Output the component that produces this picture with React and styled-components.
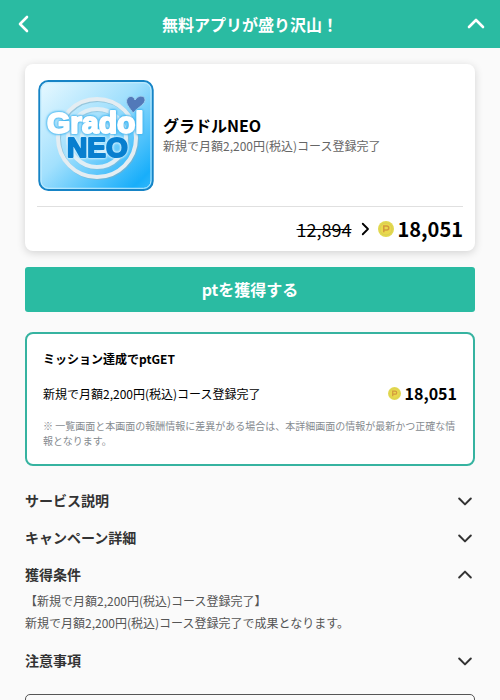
import { useState } from "react";
import styled, { createGlobalStyle } from "styled-components";

const GlobalStyle = createGlobalStyle`
  * {
    box-sizing: border-box;
  }

  html {
    scrollbar-width: none;
  }

  body {
    margin: 0;
    background-color: #fafafa;
    color: #000;
    font-family: "Noto Sans CJK JP", sans-serif;
  }

  button {
    font-family: inherit;
    color: inherit;
    cursor: pointer;
  }
`;

const Header = styled.header`
  display: flex;
  align-items: center;
  justify-content: space-between;
  height: 48px;
  padding: 0 12px;
  background-color: #2abba2;
  color: #fff;
`;

const HeaderTitle = styled.h1`
  margin: 0;
  font-size: 16px;
  line-height: 24px;
  font-weight: 700;
`;

const IconButton = styled.button`
  display: flex;
  padding: 0;
  border: none;
  background: none;
`;

const Main = styled.main`
  display: flex;
  flex-direction: column;
  padding: 16px 25px 24px;
`;

const Card = styled.section`
  padding: 12px 12px 7px;
  border-radius: 8px;
  background-color: #fff;
  box-shadow: 0 2px 8px rgba(0, 0, 0, 0.16);
`;

const Summary = styled.div`
  display: flex;
  align-items: center;
  gap: 8px;
  padding-bottom: 12px;
  border-bottom: 1px solid #e0e0e0;
`;

const Logo = styled.svg`
  flex: none;
  width: 118px;
  height: 118px;
  font-family: "Liberation Sans", sans-serif;
  font-weight: 700;
`;

const LogoText = styled.text`
  fill: ${({ $color }) => $color};
  stroke: ${({ $color }) => $color};
  stroke-width: 2px;
  stroke-linejoin: round;
  filter: drop-shadow(0 0 1px ${({ $glow }) => $glow})
    drop-shadow(0 0 1px ${({ $glow }) => $glow});
`;

const AppName = styled.h2`
  margin: 0;
  font-size: 16px;
  line-height: 20px;
  font-weight: 700;
`;

const AppText = styled.p`
  margin: 0;
  font-size: 12px;
  line-height: 21px;
  color: #666;
`;

const PriceRow = styled.div`
  display: flex;
  align-items: center;
  justify-content: flex-end;
  gap: 4px;
  padding-top: 7px;
`;

const OldPrice = styled.del`
  font-size: 18px;
  line-height: 30px;
`;

const Point = styled.span`
  display: flex;
  align-items: center;
  gap: 4px;
  font-size: ${({ $large }) => ($large ? "20px" : "16px")};
  line-height: ${({ $large }) => ($large ? "30px" : "24px")};
  font-weight: 700;
`;

const GetButton = styled.button`
  height: 45px;
  margin: 16px 0 20px;
  padding: 0 0 2px;
  border: none;
  border-radius: 3px;
  background-color: #2abba2;
  color: #fff;
  font-size: 16px;
  font-weight: 700;

  &:hover {
    opacity: 0.9;
  }
`;

const Mission = styled.section`
  margin-bottom: 24px;
  padding: 16px;
  border: 2px solid #36b3a0;
  border-radius: 8px;
  background-color: #fff;
`;

const MissionTitle = styled.h3`
  margin: 0;
  font-size: 12px;
  line-height: 18px;
  font-weight: 700;
`;

const MissionRow = styled.div`
  display: flex;
  align-items: center;
  justify-content: space-between;
  margin: 13px 0;
  font-size: 12px;
`;

const Note = styled.p`
  margin: 0;
  font-size: 10px;
  line-height: 15px;
  color: #868b90;
`;

const Item = styled.section`
  margin-bottom: 16px;
`;

const ItemHeading = styled.h3`
  margin: 0;
`;

const ItemButton = styled.button`
  display: flex;
  align-items: center;
  justify-content: space-between;
  width: 100%;
  padding: 0;
  border: none;
  background: none;
  color: #333;
  font-size: 14px;
  line-height: 21px;
  font-weight: 700;
`;

const ItemBody = styled.p`
  margin: 5px 0 0;
  font-size: 12px;
  line-height: 22px;
  color: #555;
  white-space: pre-line;
`;

const OutlineButton = styled.button`
  height: 45px;
  margin-top: 7px;
  border: 1px solid #555;
  border-radius: 5px;
  background: none;
`;

const arrows = {
  up: "M5 15l7-7 7 7",
  down: "M5 9l7 7 7-7",
  left: "M15 5l-7 7 7 7",
  right: "M9 5l7 7-7 7",
};

const Arrow = ({ to, size = 20, width = 2.4 }) => (
  <svg width={size} height={size} viewBox="0 0 24 24" aria-hidden="true">
    <path
      d={arrows[to]}
      fill="none"
      stroke="currentColor"
      strokeWidth={width}
      strokeLinecap="round"
      strokeLinejoin="round"
    />
  </svg>
);

const Coin = ({ size }) => (
  <svg width={size} height={size} viewBox="0 0 16 16" aria-hidden="true">
    <circle cx="8" cy="8" r="8" fill="#e2d94f" />
    <circle cx="8" cy="8" r="6" fill="#ead94c" stroke="#d9cf55" />
    <path
      d="M5.8 11.3V5h3a1.9 1.9 0 0 1 0 3.9H5.8"
      fill="none"
      stroke="#d29a3e"
      strokeWidth="1.5"
    />
  </svg>
);

const GradolLogo = () => (
  <Logo viewBox="0 0 118 118" role="img" aria-label="Gradol NEO">
    <defs>
      <linearGradient id="sky" x1="0" y1="0" x2="1" y2="1">
        <stop offset="0" stopColor="#e9f9ff" />
        <stop offset="0.45" stopColor="#a2e0fd" />
        <stop offset="0.9" stopColor="#18aefa" />
        <stop offset="1" stopColor="#36b8fa" />
      </linearGradient>
    </defs>
    <rect x="2.3" y="5" width="113.4" height="109" rx="9" fill="url(#sky)" stroke="#1684c6" strokeWidth="2" />
    <rect x="4" y="6.7" width="110" height="105.6" rx="7.5" fill="none" stroke="#c5edfe" />
    <g fill="none">
      <circle cx="61" cy="63" r="39" stroke="#7fafc5" strokeWidth="4" opacity="0.6" />
      <circle cx="60" cy="62" r="39" stroke="#e4edf2" strokeWidth="4" />
      <circle cx="61" cy="63" r="29" stroke="#83bad5" strokeWidth="4" opacity="0.6" />
      <circle cx="60" cy="62" r="29" stroke="#e0eef5" strokeWidth="4" />
      <path d="M45 62a15 15 0 1 1 15 15" stroke="#d5ebf5" strokeWidth="4" />
    </g>
    <path
      d="M96 37c-3-5-8-9-6-14 2-4 7-3 8 1 3-5 9-5 10-1 1 5-7 8-12 14z"
      fill="#5279b9"
      stroke="#9fd0ef"
    />
    <LogoText x="10" y="57" fontSize="30" $color="#fff" $glow="#3fb4f0">
      Gradol
    </LogoText>
    <LogoText x="30" y="81" fontSize="28" $color="#087fcf" $glow="#d5f2ff">
      NEO
    </LogoText>
  </Logo>
);

const items = [
  { title: "サービス説明" },
  { title: "キャンペーン詳細" },
  {
    title: "獲得条件",
    body: "【新規で月額2,200円(税込)コース登録完了】\n新規で月額2,200円(税込)コース登録完了で成果となります。",
  },
  { title: "注意事項" },
];

const AccordionItem = ({ title, body }) => {
  const [open, setOpen] = useState(Boolean(body));

  return (
    <Item>
      <ItemHeading>
        <ItemButton aria-expanded={open} onClick={() => setOpen(!open)}>
          {title}
          <Arrow to={open ? "up" : "down"} />
        </ItemButton>
      </ItemHeading>
      {open && body && <ItemBody>{body}</ItemBody>}
    </Item>
  );
};

export default function App() {
  return (
    <>
      <GlobalStyle />
      <Header>
        <IconButton aria-label="戻る">
          <Arrow to="left" size={24} width={2.6} />
        </IconButton>
        <HeaderTitle>無料アプリが盛り沢山！</HeaderTitle>
        <IconButton aria-label="閉じる">
          <Arrow to="up" size={24} width={2.6} />
        </IconButton>
      </Header>
      <Main>
        <Card>
          <Summary>
            <GradolLogo />
            <div>
              <AppName>グラドルNEO</AppName>
              <AppText>新規で月額2,200円(税込)コース登録完了</AppText>
            </div>
          </Summary>
          <PriceRow>
            <OldPrice>12,894</OldPrice>
            <Arrow to="right" size={18} />
            <Point $large>
              <Coin size={16} />
              18,051
            </Point>
          </PriceRow>
        </Card>
        <GetButton>ptを獲得する</GetButton>
        <Mission>
          <MissionTitle>ミッション達成でptGET</MissionTitle>
          <MissionRow>
            <span>新規で月額2,200円(税込)コース登録完了</span>
            <Point>
              <Coin size={13} />
              18,051
            </Point>
          </MissionRow>
          <Note>
            ※ 一覧画面と本画面の報酬情報に差異がある場合は、本詳細画面の情報が最新かつ正確な情報となります。
          </Note>
        </Mission>
        {items.map((item) => (
          <AccordionItem key={item.title} {...item} />
        ))}
        <OutlineButton aria-label="一覧へ戻る" />
      </Main>
    </>
  );
}
